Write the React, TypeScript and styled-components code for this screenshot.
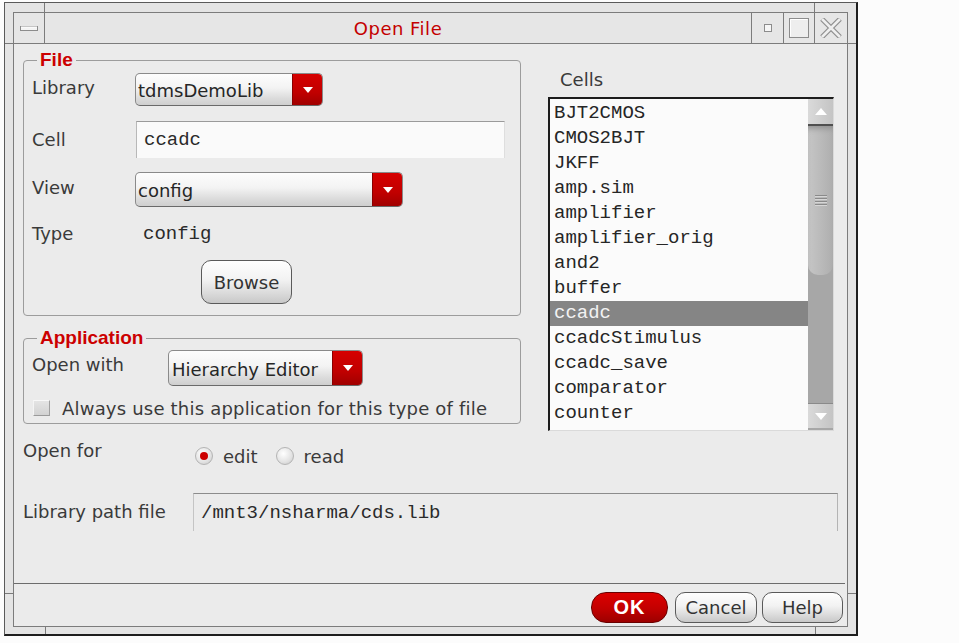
import React from "react";
import styled, { createGlobalStyle } from "styled-components";

const SANS = "'DejaVu Sans', 'Liberation Sans', sans-serif";
const MONO = "'Liberation Mono', 'DejaVu Sans Mono', monospace";

const Global = createGlobalStyle`
  html, body { margin: 0; padding: 0; background: #fcfcfc; }
  body { font-family: ${SANS}; }
  * { box-sizing: border-box; }
`;

const Page = styled.div`
  width: 959px;
  height: 643px;
  padding: 2px 0 0 4px;
`;

const Window = styled.div`
  position: relative;
  width: 854px;
  height: 634px;
  background: #e4e4e4;
  border-style: solid;
  border-color: #5a5a5a #1e1e1e #1e1e1e #5a5a5a;
  border-width: 1px 2px 2px 1px;
  padding: 9px 8px 7px 8px;
`;

const Tick = styled.div<{ $l: number; $t: number; $w: number; $h: number }>`
  position: absolute;
  left: ${(p) => p.$l}px;
  top: ${(p) => p.$t}px;
  width: ${(p) => p.$w}px;
  height: ${(p) => p.$h}px;
  background: #7a7a7a;
`;

const Inner = styled.div`
  height: 100%;
  border: 1px solid #7c7c7c;
  display: flex;
  flex-direction: column;
  background: #ebebeb;
`;

const TitleBar = styled.div`
  height: 31px;
  flex: none;
  display: flex;
  border-bottom: 1px solid #7c7c7c;
  background: #e6e6e6;
`;

const TitleCell = styled.div<{ $w: number; $side: "l" | "r" }>`
  width: ${(p) => p.$w}px;
  flex: none;
  display: flex;
  align-items: center;
  justify-content: center;
  ${(p) => (p.$side === "l" ? "border-right" : "border-left")}: 1px solid #7c7c7c;
`;

const Title = styled.div`
  flex: 1;
  display: flex;
  align-items: center;
  justify-content: center;
  color: #c40000;
  font-size: 18px;
  letter-spacing: 0.5px;
`;

const Body = styled.div`
  flex: 1;
  padding: 7px 9px 0 9px;
  display: flex;
  flex-direction: column;
`;

const Top = styled.div`
  display: flex;
  height: 380px;
  flex: none;
`;

const LeftCol = styled.div`
  width: 498px;
  flex: none;
  display: flex;
  flex-direction: column;
`;

const Group = styled.fieldset<{ $mt: number; $pb: number }>`
  margin: ${(p) => p.$mt}px 0 0 0;
  padding: 0 8px ${(p) => p.$pb}px 8px;
  border: 1px solid #9c9c9c;
  border-radius: 4px;
  min-width: 0;
`;

const Legend = styled.legend`
  margin-left: 5px;
  padding: 0 3px;
  font-family: 'Liberation Sans', sans-serif;
  font-weight: bold;
  font-size: 19px;
  line-height: 18px;
  color: #cc0000;
`;

const Row = styled.div<{ $h: number; $mt: number }>`
  display: flex;
  align-items: center;
  height: ${(p) => p.$h}px;
  margin-top: ${(p) => p.$mt}px;
  flex: none;
`;

const Label = styled.div<{ $w: number; $up?: number }>`
  width: ${(p) => p.$w}px;
  flex: none;
  font-size: 18px;
  line-height: 22px;
  color: #3a3a3a;
  padding-bottom: ${(p) => (p.$up ?? 0) * 2}px;
  white-space: nowrap;
`;

const ComboBox = styled.div<{ $w: number; $h: number }>`
  width: ${(p) => p.$w}px;
  height: ${(p) => p.$h}px;
  flex: none;
  display: flex;
  border: 1px solid #8a8a8a;
  border-bottom-color: #6a6a6a;
  border-radius: 5px;
  overflow: hidden;
  background: linear-gradient(#fdfdfd 0%, #f3f3f3 45%, #dadada 80%, #cfcfcf 100%);
`;

const ComboText = styled.div<{ $pl: number }>`
  flex: 1;
  display: flex;
  align-items: center;
  padding-left: ${(p) => p.$pl}px;
  padding-top: 2px;
  font-size: 18px;
  color: #262626;
  white-space: nowrap;
`;

const ComboBtn = styled.div`
  width: 30px;
  flex: none;
  display: flex;
  align-items: center;
  justify-content: center;
  background: linear-gradient(#d60000, #c00000 60%, #a00000);
  border-left: 1px solid #8a0000;
`;

const TextField = styled.div<{ $w: number; $h: number; $ml: number }>`
  width: ${(p) => p.$w}px;
  height: ${(p) => p.$h}px;
  margin-left: ${(p) => p.$ml}px;
  flex: none;
  display: flex;
  align-items: center;
  padding-left: 7px;
  background: #fafafa;
  border-top: 1px solid #9a9a9a;
  border-left: 1px solid #b8b8b8;
  border-right: 1px solid #dedede;
  font-family: ${MONO};
  font-size: 19px;
  color: #2a2a2a;
`;

const MonoValue = styled.div`
  padding-left: 8px;
  font-family: ${MONO};
  font-size: 19px;
  color: #2a2a2a;
`;

const RoundButton = styled.div<{ $w: number; $h: number; $ml?: number; $primary?: boolean }>`
  width: ${(p) => p.$w}px;
  height: ${(p) => p.$h}px;
  margin-left: ${(p) => p.$ml ?? 0}px;
  flex: none;
  display: flex;
  align-items: center;
  justify-content: center;
  border-radius: ${(p) => (p.$primary ? 15 : 10)}px;
  border: 1px solid ${(p) => (p.$primary ? "#6a0000" : "#5a5a5a")};
  background: ${(p) =>
    p.$primary
      ? "linear-gradient(#dc0000, #c20000 55%, #9c0000)"
      : "linear-gradient(#fefefe, #f2f2f2 45%, #d4d4d4 85%, #c8c8c8)"};
  color: ${(p) => (p.$primary ? "#ffffff" : "#333333")};
  font-family: ${(p) => (p.$primary ? "'Liberation Sans', sans-serif" : SANS)};
  font-weight: ${(p) => (p.$primary ? "bold" : "normal")};
  font-size: ${(p) => (p.$primary ? 20 : 18)}px;
  letter-spacing: ${(p) => (p.$primary ? 1 : 0)}px;
`;

const CheckBox = styled.div`
  width: 17px;
  height: 16px;
  margin-left: 1px;
  flex: none;
  background: linear-gradient(#e4e4e4, #d2d2d2);
  border: 1px solid;
  border-color: #f8f8f8 #a0a0a0 #9a9a9a #f4f4f4;
`;

const CheckLabel = styled.div`
  margin-left: 12px;
  font-size: 18px;
  color: #3a3a3a;
  white-space: nowrap;
  letter-spacing: 0.2px;
`;

const CellsCol = styled.div`
  width: 286px;
  margin-left: 27px;
  flex: none;
  display: flex;
  flex-direction: column;
`;

const CellsLabel = styled.div`
  margin-top: 18px;
  height: 22px;
  padding-left: 12px;
  font-size: 18px;
  line-height: 22px;
  color: #3a3a3a;
`;

const ListBox = styled.div`
  margin-top: 6px;
  height: 334px;
  display: flex;
  background: #fbfbfb;
  border-style: solid;
  border-width: 2px 1px 1px 2px;
  border-color: #1c1c1c #dadada #dadada #1c1c1c;
`;

const Rows = styled.div`
  flex: 1;
  display: flex;
  flex-direction: column;
  padding-top: 2px;
`;

const ListRow = styled.div<{ $sel?: boolean }>`
  height: 25px;
  flex: none;
  padding-left: 4px;
  font-family: ${MONO};
  font-size: 19px;
  line-height: 25px;
  white-space: nowrap;
  color: ${(p) => (p.$sel ? "#f2f2f2" : "#262626")};
  background: ${(p) => (p.$sel ? "#858585" : "transparent")};
`;

const ScrollBar = styled.div`
  width: 25px;
  flex: none;
  display: flex;
  flex-direction: column;
  background: #a7a7a7;
`;

const ArrowBtn = styled.div<{ $h: number; $down?: boolean }>`
  height: ${(p) => p.$h}px;
  flex: none;
  display: flex;
  align-items: center;
  justify-content: center;
  background: linear-gradient(to right, #dadada, #c4c4c4);
  ${(p) => (p.$down ? "border-top: 1px solid #8a8a8a; margin-bottom: 2px;" : "border-bottom: 2px solid #505050;")}
`;

const Thumb = styled.div`
  height: 149px;
  flex: none;
  display: flex;
  align-items: center;
  justify-content: center;
  border-radius: 0 0 10px 10px;
  background: linear-gradient(to right, #c6c6c6, #b8b8b8 60%, #aeaeae);
  box-shadow: inset 0 6px 6px -4px #8c8c8c;
`;

const Grip = styled.div`
  width: 12px;
  height: 11px;
  background: repeating-linear-gradient(#8a8a8a 0 1px, #d6d6d6 1px 2px, transparent 2px 3px);
`;

const TrackFill = styled.div`
  flex: 1;
`;

const RadioWrap = styled.div<{ $ml: number }>`
  display: flex;
  align-items: center;
  margin-left: ${(p) => p.$ml}px;
`;

const RadioDot = styled.div<{ $on?: boolean }>`
  width: 18px;
  height: 18px;
  flex: none;
  border-radius: 50%;
  display: flex;
  align-items: center;
  justify-content: center;
  border: 1px solid #b4b4b4;
  background: radial-gradient(circle at 40% 35%, #ffffff, #e2e2e2 60%, #c4c4c4);
  &::after {
    content: "";
    width: 8px;
    height: 8px;
    border-radius: 50%;
    background: ${(p) => (p.$on ? "#cc0000" : "transparent")};
  }
`;

const RadioText = styled.div`
  margin-left: 10px;
  font-size: 18px;
  color: #3a3a3a;
`;

const PathField = styled.div`
  flex: 1;
  height: 38px;
  display: flex;
  align-items: center;
  padding-left: 7px;
  border-top: 1px solid #8c8c8c;
  border-left: 1px solid #c4c4c4;
  border-right: 1px solid #b4b4b4;
  font-family: ${MONO};
  font-size: 19px;
  color: #2a2a2a;
`;

const Separator = styled.div`
  height: 1px;
  flex: none;
  margin-right: 2px;
  background: #6c6c6c;
`;

const ButtonBar = styled.div`
  height: 42px;
  flex: none;
  display: flex;
  justify-content: flex-end;
  align-items: flex-start;
  padding: 8px 4px 0 0;
`;

const DownTri = () => (
  <svg width="10" height="6" viewBox="0 0 10 6">
    <polygon points="0,0 10,0 5,6" fill="#ffffff" />
  </svg>
);

const Combo = ({ w, h, pl, text }: { w: number; h: number; pl: number; text: string }) => (
  <ComboBox $w={w} $h={h}>
    <ComboText $pl={pl}>{text}</ComboText>
    <ComboBtn>
      <DownTri />
    </ComboBtn>
  </ComboBox>
);

const cells = [
  "BJT2CMOS",
  "CMOS2BJT",
  "JKFF",
  "amp.sim",
  "amplifier",
  "amplifier_orig",
  "and2",
  "buffer",
  "ccadc",
  "ccadcStimulus",
  "ccadc_save",
  "comparator",
  "counter",
];

export default function App() {
  return (
    <Page>
      <Global />
      <Window>
        <Tick $l={39} $t={0} $w={1} $h={9} />
        <Tick $l={0} $t={40} $w={8} $h={1} />
        <Tick $l={809} $t={0} $w={1} $h={9} />
        <Tick $l={843} $t={40} $w={8} $h={1} />
        <Tick $l={0} $t={590} $w={8} $h={1} />
        <Tick $l={40} $t={624} $w={1} $h={7} />
        <Tick $l={843} $t={590} $w={8} $h={1} />
        <Tick $l={810} $t={624} $w={1} $h={7} />
        <Inner>
          <TitleBar>
            <TitleCell $w={31} $side="l">
              <svg width="18" height="5" viewBox="0 0 18 5">
                <rect x="0.5" y="0.5" width="17" height="4" fill="#f4f4f4" stroke="#8c8c8c" />
                <line x1="1" y1="1" x2="17" y2="1" stroke="#ffffff" />
              </svg>
            </TitleCell>
            <Title>Open File</Title>
            <TitleCell $w={32} $side="r">
              <svg width="8" height="8" viewBox="0 0 8 8">
                <rect x="0.5" y="0.5" width="7" height="7" fill="#f6f6f6" stroke="#8c8c8c" />
              </svg>
            </TitleCell>
            <TitleCell $w={31} $side="r">
              <svg width="20" height="20" viewBox="0 0 20 20">
                <rect x="0.5" y="0.5" width="19" height="19" fill="#eeeeee" stroke="#8c8c8c" />
                <polyline points="1.5,18.5 1.5,1.5 18.5,1.5" fill="none" stroke="#ffffff" />
              </svg>
            </TitleCell>
            <TitleCell $w={33} $side="r">
              <svg width="22" height="20" viewBox="0 0 22 20">
                <path d="M2 1 L20 19 M20 1 L2 19" stroke="#8e8e8e" strokeWidth="5" />
                <path d="M2 1 L20 19 M20 1 L2 19" stroke="#eeeeee" strokeWidth="2.6" />
              </svg>
            </TitleCell>
          </TitleBar>
          <Body>
            <Top>
              <LeftCol>
                <Group $mt={0} $pb={11}>
                  <Legend>File</Legend>
                  <Row $h={33} $mt={4}>
                    <Label $w={103} $up={2}>Library</Label>
                    <Combo w={188} h={33} pl={2} text="tdmsDemoLib" />
                  </Row>
                  <Row $h={37} $mt={15}>
                    <Label $w={103}>Cell</Label>
                    <TextField $w={369} $h={37} $ml={1}>ccadc</TextField>
                  </Row>
                  <Row $h={35} $mt={14}>
                    <Label $w={103} $up={2}>View</Label>
                    <Combo w={268} h={35} pl={2} text="config" />
                  </Row>
                  <Row $h={24} $mt={15}>
                    <Label $w={103}>Type</Label>
                    <MonoValue>config</MonoValue>
                  </Row>
                  <Row $h={44} $mt={14}>
                    <RoundButton $w={91} $h={44} $ml={169}>Browse</RoundButton>
                  </Row>
                </Group>
                <Group $mt={13} $pb={5}>
                  <Legend>Application</Legend>
                  <Row $h={36} $mt={3}>
                    <Label $w={136} $up={3}>Open with</Label>
                    <Combo w={195} h={36} pl={3} text="Hierarchy Editor" />
                  </Row>
                  <Row $h={20} $mt={12}>
                    <CheckBox />
                    <CheckLabel>Always use this application for this type of file</CheckLabel>
                  </Row>
                </Group>
              </LeftCol>
              <CellsCol>
                <CellsLabel>Cells</CellsLabel>
                <ListBox>
                  <Rows>
                    {cells.map((c) => (
                      <ListRow key={c} $sel={c === "ccadc"}>
                        {c}
                      </ListRow>
                    ))}
                  </Rows>
                  <ScrollBar>
                    <ArrowBtn $h={27}>
                      <svg width="12" height="7" viewBox="0 0 12 7">
                        <polygon points="0,7 12,7 6,0" fill="#ffffff" />
                      </svg>
                    </ArrowBtn>
                    <Thumb>
                      <Grip />
                    </Thumb>
                    <TrackFill />
                    <ArrowBtn $h={25} $down>
                      <svg width="12" height="7" viewBox="0 0 12 7">
                        <polygon points="0,0 12,0 6,7" fill="#ffffff" />
                      </svg>
                    </ArrowBtn>
                  </ScrollBar>
                </ListBox>
              </CellsCol>
            </Top>
            <Row $h={28} $mt={11}>
              <Label $w={172} $up={5}>Open for</Label>
              <RadioWrap $ml={0}>
                <RadioDot $on />
                <RadioText>edit</RadioText>
              </RadioWrap>
              <RadioWrap $ml={18}>
                <RadioDot />
                <RadioText>read</RadioText>
              </RadioWrap>
            </Row>
            <Row $h={38} $mt={23}>
              <Label $w={170}>Library path file</Label>
              <PathField>/mnt3/nsharma/cds.lib</PathField>
            </Row>
          </Body>
          <Separator />
          <ButtonBar>
            <RoundButton $w={77} $h={31} $primary>OK</RoundButton>
            <RoundButton $w={82} $h={31} $ml={7}>Cancel</RoundButton>
            <RoundButton $w={81} $h={31} $ml={5}>Help</RoundButton>
          </ButtonBar>
        </Inner>
      </Window>
    </Page>
  );
}
